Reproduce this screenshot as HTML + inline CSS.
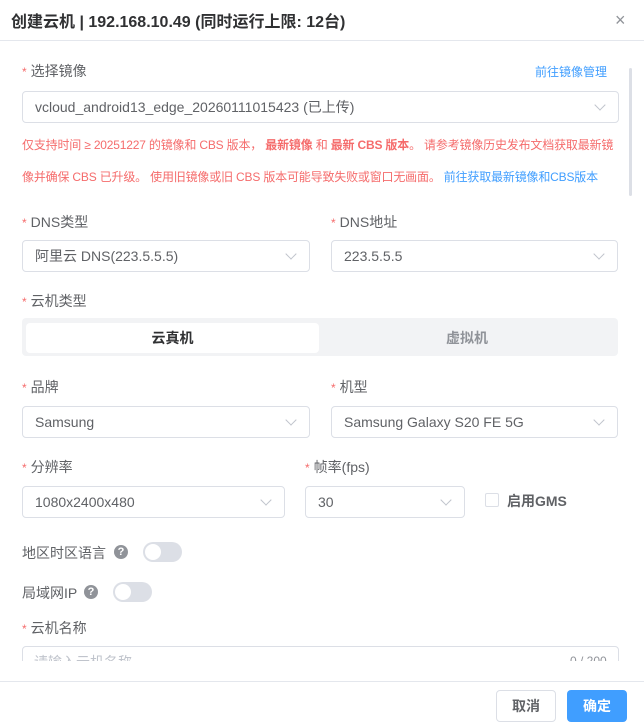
<!DOCTYPE html>
<html><head><meta charset="utf-8"><style>
*{box-sizing:border-box;margin:0;padding:0}
body{width:644px;height:727px;background:#fff;font-family:"Liberation Sans","Noto Sans CJK SC",sans-serif;color:#303133;position:relative;overflow:hidden;font-size:14px}
.a{position:absolute;white-space:nowrap}
.lbl{font-size:14px;color:#606266}
.lbl i{color:#f56c6c;font-style:normal;font-size:12px;margin-right:4px}
.sel{position:absolute;border:1px solid #dcdfe6;border-radius:4px;height:32px;font-size:14px;color:#606266;padding:0 12px;line-height:30px}
.sel:after{content:"";position:absolute;right:14px;top:9px;width:7px;height:7px;border-right:1px solid #c0c4cc;border-bottom:1px solid #c0c4cc;transform:rotate(45deg)}
.tg{position:absolute;width:39px;height:20px;border-radius:10px;background:#dcdfe6}
.tg:after{content:"";position:absolute;left:2px;top:2px;width:16px;height:16px;border-radius:50%;background:#fff}
.q{position:absolute;width:14px;height:14px;border-radius:50%;background:#909399;color:#fff;font-size:11px;font-weight:bold;text-align:center;line-height:14px}
.red{font-size:12px;color:#f56c6c;letter-spacing:-0.18px}
</style></head><body>
<div class="a" style="left:11px;top:8px;font-size:16px;font-weight:bold;color:#303133">创建云机 | 192.168.10.49 (同时运行上限: 12台)</div>
<div class="a" style="left:615px;top:10px;font-size:18px;color:#909399">×</div>
<div class="a" style="left:0;top:40px;width:644px;height:1px;background:#e4e7ed"></div>
<div class="a" style="left:629px;top:68px;width:3px;height:128px;background:#dcdfe6;border-radius:2px"></div>

<div class="a lbl" style="left:22px;top:61px"><i>*</i>选择镜像</div>
<div class="a" style="left:535px;top:63px;font-size:12px;color:#409eff">前往镜像管理</div>
<div class="sel" style="left:22px;top:91px;width:597px">vcloud_android13_edge_20260111015423 (已上传)</div>
<div class="a red" style="left:22px;top:136px">仅支持时间 ≥ 20251227 的镜像和 CBS 版本， <b>最新镜像</b> 和 <b>最新 CBS 版本</b>。 请参考镜像历史发布文档获取最新镜</div>
<div class="a red" style="left:22px;top:168px">像并确保 CBS 已升级。 使用旧镜像或旧 CBS 版本可能导致失败或窗口无画面。 <span style="color:#409eff">前往获取最新镜像和CBS版本</span></div>

<div class="a lbl" style="left:22px;top:212px"><i>*</i>DNS类型</div>
<div class="a lbl" style="left:331px;top:212px"><i>*</i>DNS地址</div>
<div class="sel" style="left:22px;top:240px;width:288px">阿里云 DNS(223.5.5.5)</div>
<div class="sel" style="left:331px;top:240px;width:287px">223.5.5.5</div>

<div class="a lbl" style="left:22px;top:291px"><i>*</i>云机类型</div>
<div class="a" style="left:22px;top:318px;width:596px;height:38px;background:#f2f3f5;border-radius:4px"></div>
<div class="a" style="left:26px;top:323px;width:293px;height:30px;background:#fff;border-radius:4px;text-align:center;line-height:30px;font-weight:bold;font-size:14px;color:#303133">云真机</div>
<div class="a" style="left:319px;top:323px;width:296px;height:30px;text-align:center;line-height:30px;font-weight:bold;color:#909399">虚拟机</div>

<div class="a lbl" style="left:22px;top:377px"><i>*</i>品牌</div>
<div class="a lbl" style="left:331px;top:377px"><i>*</i>机型</div>
<div class="sel" style="left:22px;top:406px;width:288px">Samsung</div>
<div class="sel" style="left:331px;top:406px;width:287px">Samsung Galaxy S20 FE 5G</div>

<div class="a lbl" style="left:22px;top:457px"><i>*</i>分辨率</div>
<div class="a lbl" style="left:305px;top:457px"><i>*</i>帧率(fps)</div>
<div class="sel" style="left:22px;top:486px;width:263px">1080x2400x480</div>
<div class="sel" style="left:305px;top:486px;width:160px">30</div>
<div class="a" style="left:485px;top:493px;width:14px;height:14px;border:1px solid #dcdfe6;border-radius:2px"></div>
<div class="a" style="left:507px;top:491px;font-size:14px;font-weight:bold;color:#606266">启用GMS</div>

<div class="a lbl" style="left:22px;top:543px">地区时区语言</div>
<div class="q" style="left:114px;top:545px">?</div>
<div class="tg" style="left:143px;top:542px"></div>
<div class="a lbl" style="left:22px;top:583px">局域网IP</div>
<div class="q" style="left:84px;top:585px">?</div>
<div class="tg" style="left:113px;top:582px"></div>

<div class="a lbl" style="left:22px;top:618px"><i>*</i>云机名称</div>
<div class="a" style="left:22px;top:646px;width:597px;height:32px;border:1px solid #dcdfe6;border-radius:4px"></div>
<div class="a" style="left:34px;top:652px;font-size:14px;color:#c0c4cc">请输入云机名称</div>
<div class="a" style="left:570px;top:654px;font-size:12px;color:#909399">0 / 200</div>
<div class="a" style="left:0;top:661px;width:644px;height:66px;background:#fff"></div>
<div class="a" style="left:0;top:681px;width:644px;height:1px;background:#e4e7ed"></div>
<div class="a" style="left:496px;top:690px;width:60px;height:32px;border:1px solid #dcdfe6;border-radius:4px;text-align:center;line-height:30px;font-weight:bold;color:#606266">取消</div>
<div class="a" style="left:567px;top:690px;width:60px;height:32px;background:#409eff;border-radius:4px;text-align:center;line-height:32px;font-weight:bold;color:#fff">确定</div>
</body></html>
